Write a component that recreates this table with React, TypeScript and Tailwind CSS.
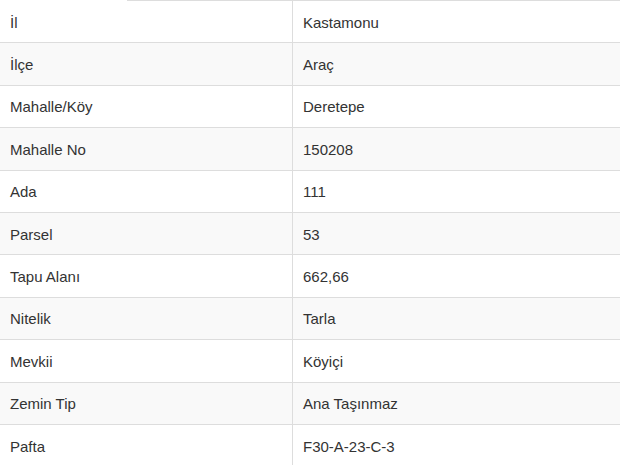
const rows: [string, string][] = [
  ['İl', 'Kastamonu'],
  ['İlçe', 'Araç'],
  ['Mahalle/Köy', 'Deretepe'],
  ['Mahalle No', '150208'],
  ['Ada', '111'],
  ['Parsel', '53'],
  ['Tapu Alanı', '662,66'],
  ['Nitelik', 'Tarla'],
  ['Mevkii', 'Köyiçi'],
  ['Zemin Tip', 'Ana Taşınmaz'],
  ['Pafta', 'F30-A-23-C-3'],
]

export default function App() {
  return (
    <div className="w-[620px] h-[465px] overflow-hidden bg-white text-[15px] text-[#333] font-['Liberation_Sans',Arial,sans-serif]">
      <div className="flex h-px">
        <div className="w-[127px] bg-white" />
        <div className="flex-1 bg-[#ddd]" />
      </div>
      {rows.map(([label, value], i) => (
        <div
          key={label}
          className={`flex border-[#ddd] ${i > 0 ? 'border-t' : ''} ${i % 2 === 1 ? 'bg-[#f9f9f9]' : 'bg-white'}`}
        >
          <div className="w-[292px] px-[10px] pt-[10.5px] pb-[9.5px] leading-[21.4px]">{label}</div>
          <div className="flex-1 border-l border-[#ddd] px-[10px] pt-[10.5px] pb-[9.5px] leading-[21.4px]">{value}</div>
        </div>
      ))}
    </div>
  )
}
